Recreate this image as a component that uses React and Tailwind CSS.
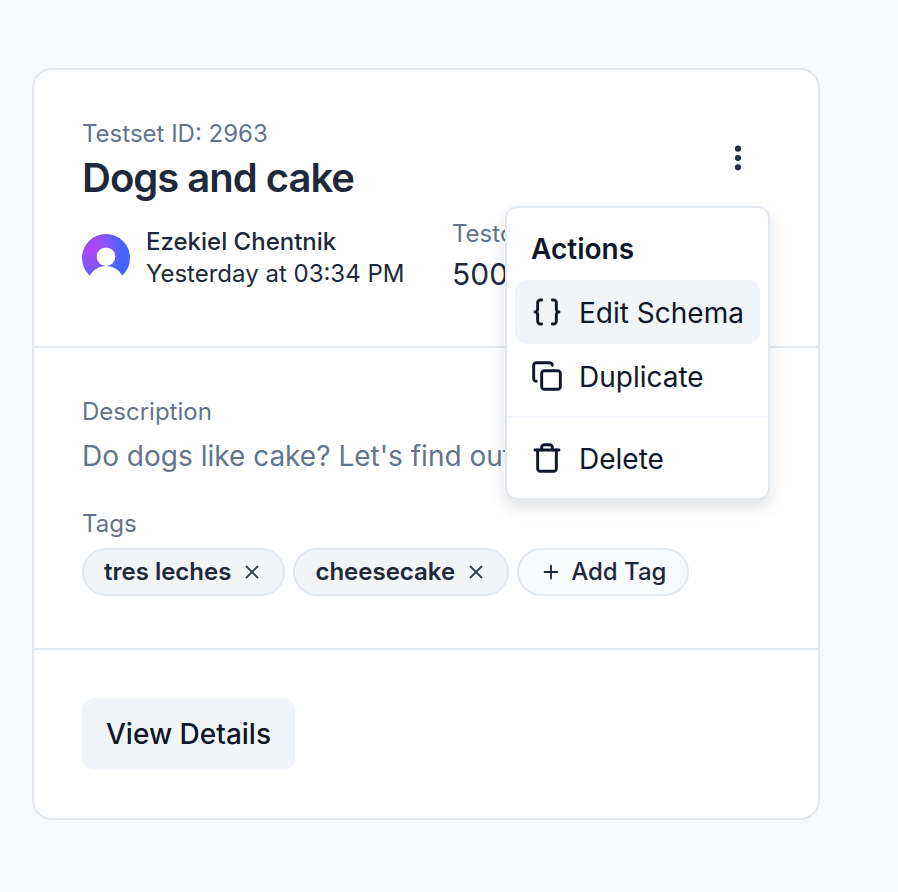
import React from "react";
import { Braces, Copy, EllipsisVertical, Plus, Trash, X } from "lucide-react";

function Avatar() {
  return (
    <svg width="48" height="48" viewBox="0 0 48 48" className="shrink-0">
      <defs>
        <radialGradient id="av" gradientUnits="userSpaceOnUse" cx="10" cy="15" r="32">
          <stop offset="0%" stopColor="#b344f5" />
          <stop offset="45%" stopColor="#8f52f7" />
          <stop offset="100%" stopColor="#4465fb" />
        </radialGradient>
      </defs>
      <circle cx="24" cy="24" r="24" fill="url(#av)" />
      <circle cx="24" cy="22.7" r="9.3" fill="#fff" />
      <path d="M8 41 C12 35 18 32 24 32 C30 32 36 35 40 41 L41 48 L7 48 Z" fill="#fff" />
    </svg>
  );
}

function Tag({ children }) {
  return (
    <span className="flex items-center h-[48px] pl-[20px] pr-[20px] gap-[10px] rounded-full border-2 border-[#e2e8f0] bg-[#f3f4f6] text-[24px] font-semibold text-[#1e293b]">
      {children}
      <X size={22} strokeWidth={2} className="text-[#334155]" />
    </span>
  );
}

function Item({ icon: Icon, children, active }) {
  return (
    <div className={`flex items-center h-[64px] px-[16px] gap-[16px] rounded-[12px] text-[28px] text-[#0f172a] whitespace-nowrap ${active ? "bg-[#f1f5f9]" : ""}`}>
      <Icon size={32} strokeWidth={2.2} className="shrink-0" />
      <span className="pt-[1px]">{children}</span>
    </div>
  );
}

export default function App() {
  return (
    <div className="min-h-[892px] bg-[#f8fafc] pt-[68px] pl-[32px] font-['Inter',sans-serif]">
      <div className="relative w-[788px] h-[752px] bg-white border-2 border-[#e2e8f0] rounded-[20px]">
        <div className="h-[278px] border-b-2 border-[#e2e8f0] px-[48px] pt-[48px] flex justify-between">
          <div>
            <div className="text-[24px] leading-[32px] text-[#64748b]">Testset ID: 2963</div>
            <div className="text-[40px] leading-[48px] font-semibold tracking-[-1px] text-[#1e293b] mt-[4px]">Dogs and cake</div>
            <div className="flex mt-[24px]">
              <div className="flex items-center gap-[16px] w-[370px]">
                <Avatar />
                <div className="text-[24px] leading-[32px] text-[#1e293b]">
                  <div className="font-medium">Ezekiel Chentnik</div>
                  <div>Yesterday at 03:34 PM</div>
                </div>
              </div>
              <div className="-mt-[8px] -mb-[12px]">
                <div className="text-[24px] leading-[32px] text-[#64748b]">Testcases</div>
                <div className="text-[30px] leading-[40px] text-[#1e293b] mt-[4px]">500</div>
              </div>
            </div>
          </div>
          <EllipsisVertical size={32} strokeWidth={2.6} className="mt-[24px] mr-[16px] text-[#1e293b]" />
        </div>
        <div className="h-[302px] border-b-2 border-[#e2e8f0] px-[48px] pt-[48px]">
          <div className="text-[24px] leading-[32px] text-[#64748b]">Description</div>
          <div className="text-[28px] leading-[44px] text-[#64748b] mt-[6px]">Do dogs like cake? Let's find out together!</div>
          <div className="text-[24px] leading-[32px] text-[#64748b] mt-[30px]">Tags</div>
          <div className="flex gap-[8px] mt-[8px]">
            <Tag>tres leches</Tag>
            <Tag>cheesecake</Tag>
            <span className="flex items-center h-[48px] pl-[21px] pr-[21px] gap-[9px] rounded-full border-2 border-[#e2e8f0] bg-[#f9fafb] text-[24px] font-medium text-[#1e293b]">
              <Plus size={22} strokeWidth={2} />
              Add Tag
            </span>
          </div>
        </div>
        <div className="px-[48px] pt-[48px]">
          <button className="h-[72px] w-[213px] rounded-[12px] bg-[#f1f5f9] text-[28px] font-medium text-[#0f172a]">View Details</button>
        </div>
        <div className="absolute left-[471px] top-[136px] w-[265px] h-[294px] bg-white border-2 border-[#e2e8f0] rounded-[12px] shadow-[0_8px_16px_rgba(15,23,42,0.12)] p-[8px]">
          <div className="h-[64px] flex items-center px-[16px] pt-[1px] text-[28px] font-semibold text-[#0f172a]">Actions</div>
          <Item icon={Braces} active>Edit Schema</Item>
          <Item icon={Copy}>Duplicate</Item>
          <div className="h-[2px] bg-[#f1f5f9] -mx-[8px] my-[8px]" />
          <Item icon={Trash}>Delete</Item>
        </div>
      </div>
    </div>
  );
}
